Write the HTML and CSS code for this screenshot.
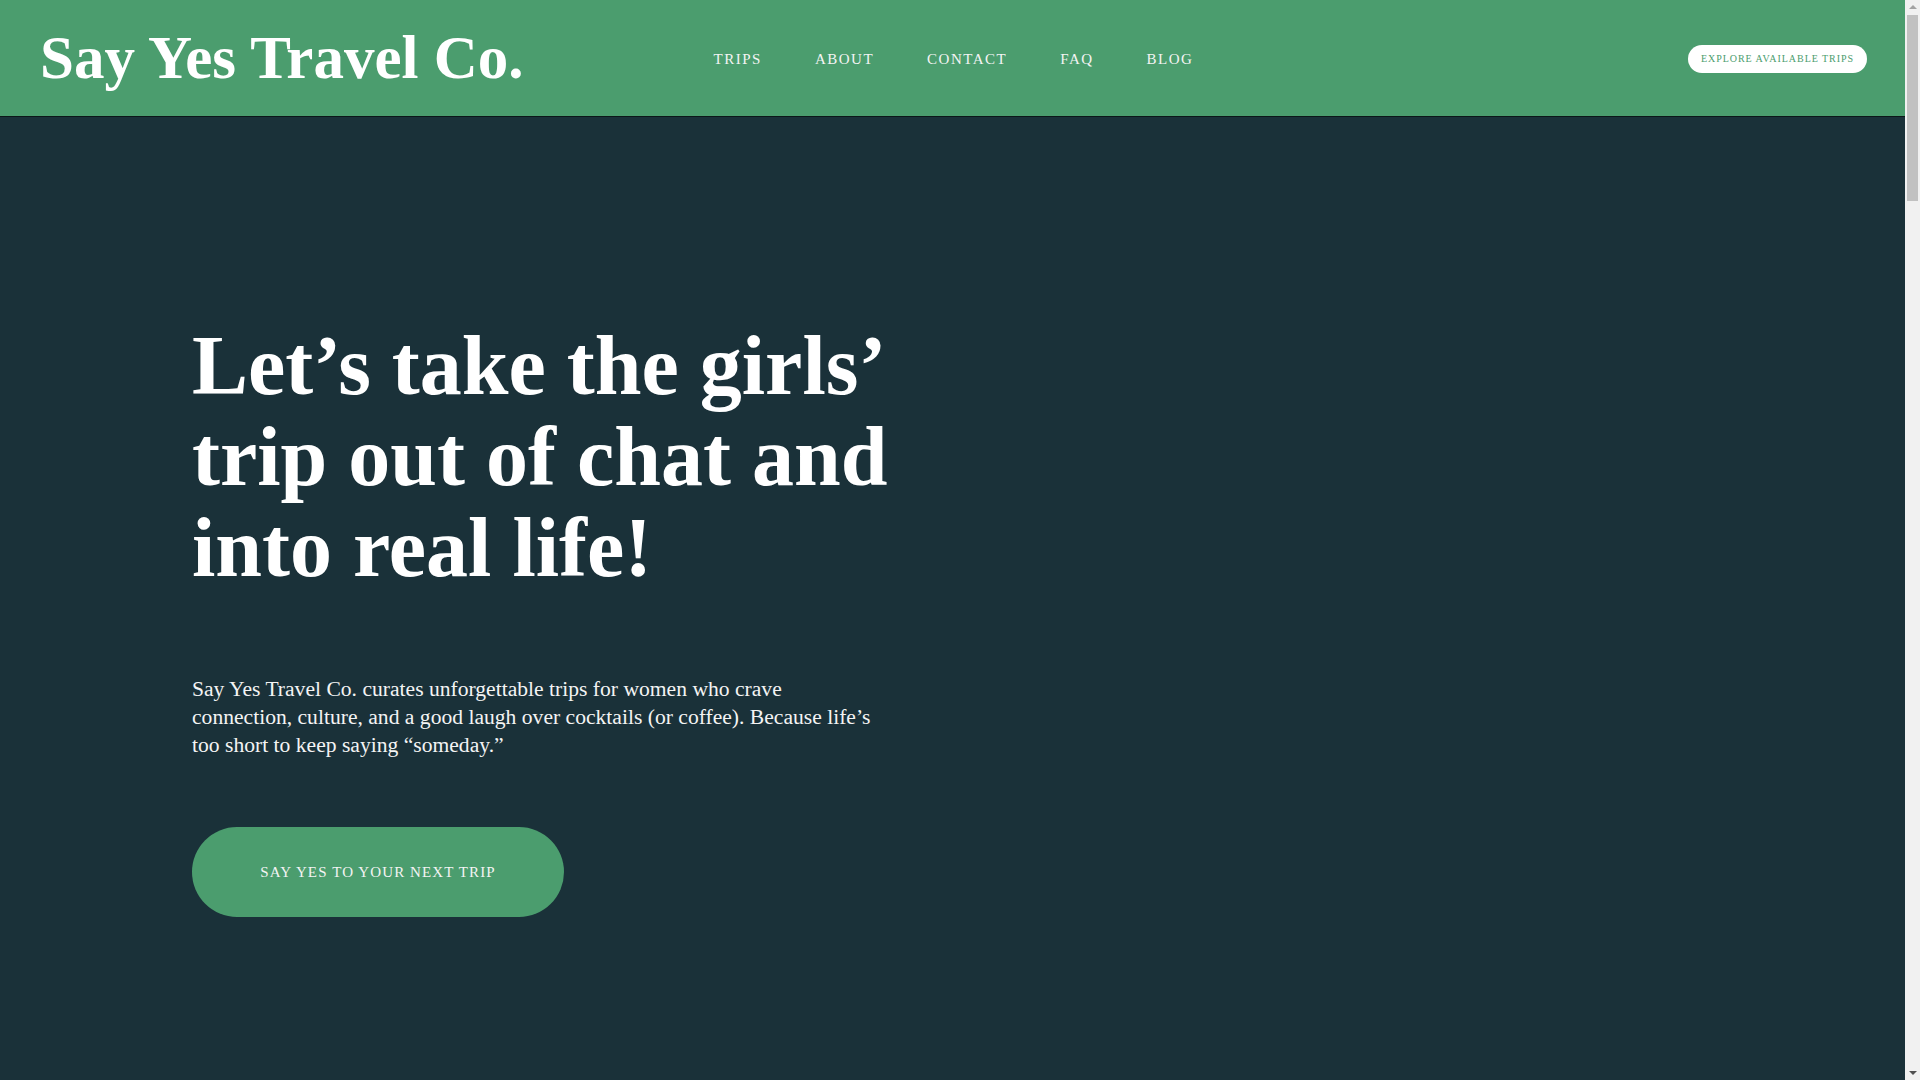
FILE: index.html
```html
<!DOCTYPE html>
<html lang="en">
<head>
  <meta charset="UTF-8">
  <meta name="viewport" content="width=device-width, initial-scale=1.0">
  <title>Say Yes Travel Co.</title>
  <link rel="stylesheet" href="styles.css">
</head>
<body>

<div class="page">
  <header class="site-header">
    <a class="logo" href="#">Say Yes Travel Co.</a>
    <nav class="main-nav">
      <a href="#trips">TRIPS</a>
      <a href="#about">ABOUT</a>
      <a href="#contact">CONTACT</a>
      <a href="#faq">FAQ</a>
      <a href="#blog">BLOG</a>
    </nav>
    <div class="header-cta">
      <a class="explore-btn" href="#trips">EXPLORE AVAILABLE TRIPS</a>
    </div>
  </header>

  <section class="hero">
    <div class="hero-inner">
      <h1>Let&rsquo;s take the girls&rsquo; trip out of chat and into real life!</h1>
      <p class="hero-text">Say Yes Travel Co. curates unforgettable trips for women who crave connection, culture, and a good laugh over cocktails (or coffee). Because life&rsquo;s too short to keep saying &ldquo;someday.&rdquo;</p>
      <a class="hero-btn" href="#trips">SAY YES TO YOUR NEXT TRIP</a>
    </div>
  </section>
</div>

<!-- window scrollbar as it shows in the screenshot -->
<div class="scroll-rail" aria-hidden="true">
  <span class="arrow up"></span>
  <span class="thumb"></span>
  <span class="arrow down"></span>
</div>

</body>
</html>
```

FILE: styles.css
```css
* {
  box-sizing: border-box;
}

body {
  margin: 0;
  background-color: #1a3139;
  color: #fff;
  font-family: "Liberation Serif", "Times New Roman", serif;
}

a {
  color: inherit;
  text-decoration: none;
}

.page {
  margin-right: 15px;
}

.site-header {
  display: grid;
  grid-template-columns: 1fr auto 1fr;
  align-items: center;
  height: 117px;
  padding: 0 38px 0 40px;
  background-color: #4b9d6e;
  border-bottom: 1px solid #0c1719;
}

.logo {
  font-size: 61px;
  font-weight: bold;
  color: #fff;
  white-space: nowrap;
}

.main-nav {
  display: flex;
  gap: 53px;
  padding-top: 3px;
}

.main-nav a {
  font-size: 15px;
  letter-spacing: 1.5px;
  color: #f4f4f4;
}

.header-cta {
  display: flex;
  justify-content: flex-end;
  padding-top: 1px;
}

.explore-btn {
  display: inline-flex;
  align-items: center;
  height: 28px;
  padding: 0 13px;
  border-radius: 14px;
  background: #fff;
  color: #4b9d6e;
  font-size: 10px;
  letter-spacing: 0.95px;
}

.hero {
  height: calc(100vh - 117px);
  padding-top: 203px;
}

.hero-inner {
  max-width: 1521px;
  margin: 0 auto;
}

.hero h1 {
  width: 720px;
  margin: 0;
  font-size: 84px;
  line-height: 91px;
  font-weight: bold;
}

.hero-text {
  max-width: 690px;
  margin: 82px 0 0;
  font-size: 21.6px;
  line-height: 28px;
  color: #f4f4f4;
}

.hero-btn {
  display: flex;
  align-items: center;
  justify-content: center;
  width: 372px;
  height: 90px;
  margin-top: 68px;
  border-radius: 45px;
  background-color: #4b9d6e;
  font-size: 15px;
  letter-spacing: 1.1px;
  color: #f4f4f4;
}

.scroll-rail {
  position: fixed;
  top: 0;
  right: 0;
  bottom: 0;
  width: 15px;
  background: #f1f1f1;
}

.scroll-rail .thumb {
  position: absolute;
  top: 15px;
  left: 2px;
  width: 11px;
  height: 186px;
  background: #c1c1c1;
}

.scroll-rail .arrow {
  position: absolute;
  left: 4px;
  width: 0;
  height: 0;
  border-left: 4px solid transparent;
  border-right: 4px solid transparent;
}

.scroll-rail .up {
  top: 5px;
  border-bottom: 4px solid #a3a3a3;
}

.scroll-rail .down {
  bottom: 5px;
  border-top: 4px solid #505050;
}
```
